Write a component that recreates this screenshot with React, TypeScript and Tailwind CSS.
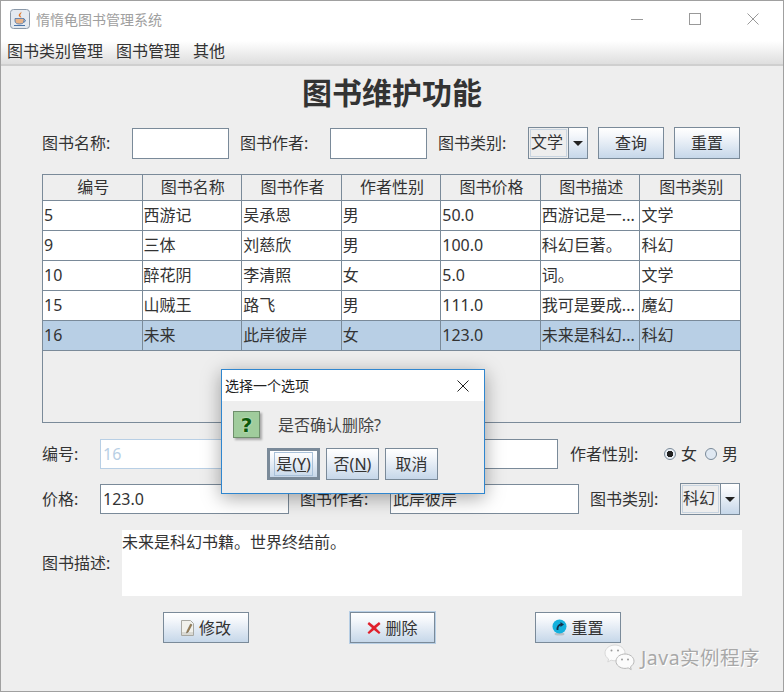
import type { ReactNode } from 'react'

const fontStack = 'font-["Noto_Sans","Noto_Sans_CJK_SC",sans-serif]'
const btnGradient = 'bg-[linear-gradient(#ffffff_0%,#f4f7fb_25%,#c6d7e9_100%)]'

const columns = ['编号', '图书名称', '图书作者', '作者性别', '图书价格', '图书描述', '图书类别']

const rows = [
    ['5', '西游记', '吴承恩', '男', '50.0', '西游记是一...', '文学'],
    ['9', '三体', '刘慈欣', '男', '100.0', '科幻巨著。', '科幻'],
    ['10', '醉花阴', '李清照', '女', '5.0', '词。', '文学'],
    ['15', '山贼王', '路飞', '男', '111.0', '我可是要成...', '魔幻'],
    ['16', '未来', '此岸彼岸', '女', '123.0', '未来是科幻...', '科幻'],
]

function Field({ className, value, disabled }: { className: string; value?: string; disabled?: boolean }) {
    return (
        <div
            className={`h-[30px] shrink-0 border bg-white pl-[2px] text-[16px] leading-[28px] ${
                disabled ? 'border-[#b8cfe5] text-[#b8cfe5]' : 'border-[#7a8a99] text-[#333333]'
            } ${className}`}
        >
            {value}
        </div>
    )
}

function Label({ children, className = '' }: { children: ReactNode; className?: string }) {
    return <span className={`shrink-0 whitespace-nowrap text-[16px] text-[#333333] ${className}`}>{children}</span>
}

function Combo({ value, className = '' }: { value: string; className?: string }) {
    return (
        <div className={`flex h-[32px] w-[60px] shrink-0 border border-[#7a8a99] ${className}`}>
            <div className="m-[1px] flex-1 border border-[#c8d4e0] bg-[#eeeeee] text-[16px] leading-[24px] text-[#333333]">
                {value}
            </div>
            <div className={`flex w-[19px] items-center justify-center border-l border-[#7a8a99] ${btnGradient}`}>
                <div className="h-0 w-0 border-x-[5px] border-t-[5px] border-x-transparent border-t-[#222222]" />
            </div>
        </div>
    )
}

function Button({ children, className = '' }: { children: ReactNode; className?: string }) {
    return (
        <div
            className={`flex shrink-0 items-center justify-center border border-[#7a8a99] text-[16px] text-[#333333] ${btnGradient} ${className}`}
        >
            {children}
        </div>
    )
}

function JavaIcon() {
    return (
        <svg width="20" height="20" viewBox="0 0 20 20" className="shrink-0">
            <rect x="0.5" y="0.5" width="19" height="19" rx="3" fill="#e4e9f0" stroke="#8a98a8" />
            <path d="M11 2.500c1.500 2-1.500 2.500-.5 4.500.4.800 1.200 1.500 1.200 1.500-2-.3-3.700-1.500-2.700-3.300.7-1 2-1.200 2-2.700z" fill="#e0772a" />
            <path d="M5 9.500h9v2.500c0 2-2 3-4.500 3S5 14 5 12z" fill="#e8b48a" stroke="#4a74a8" strokeWidth="0.800" />
            <path d="M14 10.500c2 0 2 2.500-.5 2.500" fill="none" stroke="#4a74a8" />
            <path d="M4 16.500h11" stroke="#4a74a8" />
        </svg>
    )
}

function EditIcon() {
    return (
        <svg width="13" height="16" viewBox="0 0 13 16" className="shrink-0">
            <path d="M.5.500h9l3 3v12H.5z" fill="#f1f1ec" stroke="#a8a8a2" />
            <path d="M1 12h11v3H1z" fill="#d9d9d3" />
            <path d="M9.500 4L6 11l-.5 2 1.700-1 3.800-7.200z" fill="#a5814e" stroke="#5f5a4c" strokeWidth="0.500" />
        </svg>
    )
}

function DeleteIcon() {
    return (
        <svg width="14" height="14" viewBox="0 0 14 14" className="shrink-0">
            <path d="M2 1l5 4 5-4 1.500 2L9 7l4.500 4.500L12 13 7 9l-5 4-1.500-1.500L5 7 .5 3z" fill="#e0202c" />
        </svg>
    )
}

function ResetIcon() {
    return (
        <svg width="15" height="17" viewBox="0 0 15 17" className="shrink-0">
            <ellipse cx="7.500" cy="15" rx="5" ry="1.500" fill="#b9c0c6" />
            <circle cx="7.500" cy="7.500" r="7" fill="#14b0dc" />
            <path d="M5.500 11c-.3-3.500 1.200-5.500 4-5.500" fill="none" stroke="#17304a" strokeWidth="1.800" />
            <path d="M8.500 3l3.500 2.500-3.500 2.500z" fill="#17304a" />
        </svg>
    )
}

function WechatIcon() {
    return (
        <svg width="32" height="28" viewBox="0 0 32 28" className="shrink-0">
            <path d="M11 1C5.500 1 1 4.500 1 9c0 2.500 1.400 4.600 3.600 6l-.8 3 3.300-1.800c1.200.4 2.500.6 3.900.6 5.500 0 10-3.500 10-7.800S16.500 1 11 1z" fill="#fbfbfb" stroke="#d8d8d8" />
            <path d="M21 10c-5 0-9 3.200-9 7.200s4 7.200 9 7.200c1.100 0 2.200-.2 3.200-.5l3 1.700-.7-2.800c2-1.300 3.500-3.400 3.500-5.600 0-4-4-7.200-9-7.200z" fill="#fbfbfb" stroke="#b8b8b8" />
            <circle cx="7.500" cy="6.500" r="1" fill="#9a9a9a" />
            <circle cx="14" cy="6.500" r="1" fill="#9a9a9a" />
            <circle cx="18" cy="15.500" r="1" fill="#9a9a9a" />
            <circle cx="24" cy="15.500" r="1" fill="#9a9a9a" />
        </svg>
    )
}

function CloseIcon({ size, color }: { size: number; color: string }) {
    return (
        <svg width={size} height={size} viewBox="0 0 12 12">
            <path d="M.5.500l11 11M11.500.500l-11 11" stroke={color} strokeWidth="1" fill="none" />
        </svg>
    )
}

function ConfirmDialog() {
    return (
        <div className="absolute left-[220px] top-[368px] h-[125px] w-[264px] border border-[#2f86cf] bg-[#eeeeee] shadow-[0_4px_18px_rgba(0,0,0,0.35)]">
            <div className="flex h-[31px] items-center justify-between bg-white pl-[3px] pr-[15px] text-[14px] text-[#222222]">
                <span>选择一个选项</span>
                <CloseIcon size={12} color="#222222" />
            </div>
            <div className="flex items-center pl-[11px] pt-[10px]">
                <div className='flex h-[27px] w-[27px] items-center justify-center border border-[#6f8f6c] bg-[#a0cc9c] font-["DejaVu_Sans",sans-serif] text-[20px] font-bold leading-none text-[#0c5a0c] shadow-[2px_2px_2px_#aaaaaa] [text-shadow:0_0_2px_#e6f5e0]'>
                    ?
                </div>
                <span className="ml-[18px] text-[16px] text-[#444444]">是否确认删除?</span>
            </div>
            <div className="ml-[45px] mt-[10px] flex gap-[6px]">
                <Button className="h-[32px] w-[53px] border-[3px]">
                    <span className="border border-[#a8c0d8] px-[1px] leading-[22px]">
                        是(<span className="underline">Y</span>)
                    </span>
                </Button>
                <Button className="h-[32px] w-[53px]">
                    否(<span className="underline">N</span>)
                </Button>
                <Button className="h-[32px] w-[53px]">取消</Button>
            </div>
        </div>
    )
}

export default function App() {
    return (
        <div className={`relative h-[692px] w-[784px] overflow-hidden border border-[#a0a0a0] bg-[#eeeeee] ${fontStack}`}>
            <header className="flex h-[36px] items-center bg-white pl-[9px] pr-[24px]">
                <JavaIcon />
                <span className="ml-[6px] text-[14px] text-[#a0a0a0]">惰惰龟图书管理系统</span>
                <div className="ml-auto flex items-center gap-[46px]">
                    <div className="h-px w-[12px] bg-[#999999]" />
                    <div className="h-[12px] w-[12px] border border-[#999999]" />
                    <CloseIcon size={12} color="#999999" />
                </div>
            </header>
            <nav className="flex h-[29px] items-center gap-[13px] border-b-2 border-[#cfcfcf] bg-[linear-gradient(#ffffff_0%,#ffffff_15%,#dedede_100%)] pl-[6px] text-[16px] text-[#333333]">
                <span>图书类别管理</span>
                <span>图书管理</span>
                <span>其他</span>
            </nav>

            <main className="px-[41px]">
                <h1 className="mt-[2px] text-center text-[30px] font-bold leading-[50px] text-[#333333]">图书维护功能</h1>

                <div className="mt-[9px] flex h-[32px] items-center">
                    <Label className="w-[90px]">图书名称:</Label>
                    <Field className="h-[31px] w-[97px]" />
                    <Label className="ml-[11px] w-[90px]">图书作者:</Label>
                    <Field className="h-[31px] w-[97px]" />
                    <Label className="ml-[11px] w-[90px]">图书类别:</Label>
                    <Combo value="文学" />
                    <Button className="ml-[10px] h-[32px] w-[66px]">查询</Button>
                    <Button className="ml-[10px] h-[32px] w-[66px]">重置</Button>
                </div>

                <div className="mt-[15px] h-[249px] w-[699px] border border-[#7a8a99] bg-[#eeeeee] text-[16px] text-[#333333]">
                    <div className="grid h-[26px] grid-cols-7 border-b border-[#7a8a99] bg-[#eeeeee]">
                        {columns.map((name) => (
                            <div key={name} className="border-r border-[#7a8a99] pl-[2px] text-center leading-[25px] last:border-r-0">
                                {name}
                            </div>
                        ))}
                    </div>
                    {rows.map((row, i) => (
                        <div
                            key={row[0]}
                            className={`grid h-[30px] grid-cols-7 border-b border-[#7a8a99] ${i === 4 ? 'bg-[#b8cfe5]' : 'bg-white'}`}
                        >
                            {row.map((cell, j) => (
                                <div key={j} className="truncate border-r border-[#7a8a99] pl-[1px] leading-[29px] last:border-r-0">
                                    {cell}
                                </div>
                            ))}
                        </div>
                    ))}
                </div>

                <div className="mt-[16px] flex h-[30px] items-center">
                    <Label className="w-[58px]">编号:</Label>
                    <Field className="w-[180px]" value="16" disabled />
                    <Label className="ml-[10px] w-[90px]">图书名称:</Label>
                    <Field className="w-[178px]" value="未来" />
                    <Label className="ml-[12px] w-[94px]">作者性别:</Label>
                    <span className="h-[12px] w-[12px] rounded-full border border-[#7a8a99] bg-[radial-gradient(#222222_0%,#222222_45%,#e8eef5_50%)]" />
                    <Label className="ml-[5px]">女</Label>
                    <span className="ml-[8px] h-[12px] w-[12px] rounded-full border border-[#7a8a99] bg-[#dfe8f2]" />
                    <Label className="ml-[5px]">男</Label>
                </div>

                <div className="mt-[15px] flex h-[30px] items-center">
                    <Label className="w-[58px]">价格:</Label>
                    <Field className="w-[189px]" value="123.0" />
                    <Label className="ml-[11px] w-[90px]">图书作者:</Label>
                    <Field className="w-[189px]" value="此岸彼岸" />
                    <Label className="ml-[11px] w-[90px]">图书类别:</Label>
                    <Combo value="科幻" className="h-[30px]" />
                </div>

                <div className="mt-[15px] flex h-[67px] items-center">
                    <Label className="w-[80px]">图书描述:</Label>
                    <div className="h-[66px] w-[620px] bg-white text-[16px] leading-[24px] text-[#333333]">未来是科幻书籍。世界终结前。</div>
                </div>

                <div className="relative mt-[16px] flex h-[32px]">
                    <Button className="ml-[121px] h-[31px] w-[86px] gap-[5px]">
                        <EditIcon />
                        修改
                    </Button>
                    <Button className="ml-[101px] h-[31px] w-[85px] gap-[4px] shadow-[0_0_0_1px_#b8cfe5]">
                        <DeleteIcon />
                        删除
                    </Button>
                    <Button className="ml-[100px] h-[31px] w-[86px] gap-[4px]">
                        <ResetIcon />
                        重置
                    </Button>
                </div>
            </main>

            <div className="absolute left-[603px] top-[642px] flex items-center gap-[5px] text-[19.500px] tracking-[0.500px] text-[#a8a8a8] [text-shadow:1px_1px_0_#ffffff]">
                <WechatIcon />
                <span>Java实例程序</span>
            </div>

            <ConfirmDialog />
        </div>
    )
}
